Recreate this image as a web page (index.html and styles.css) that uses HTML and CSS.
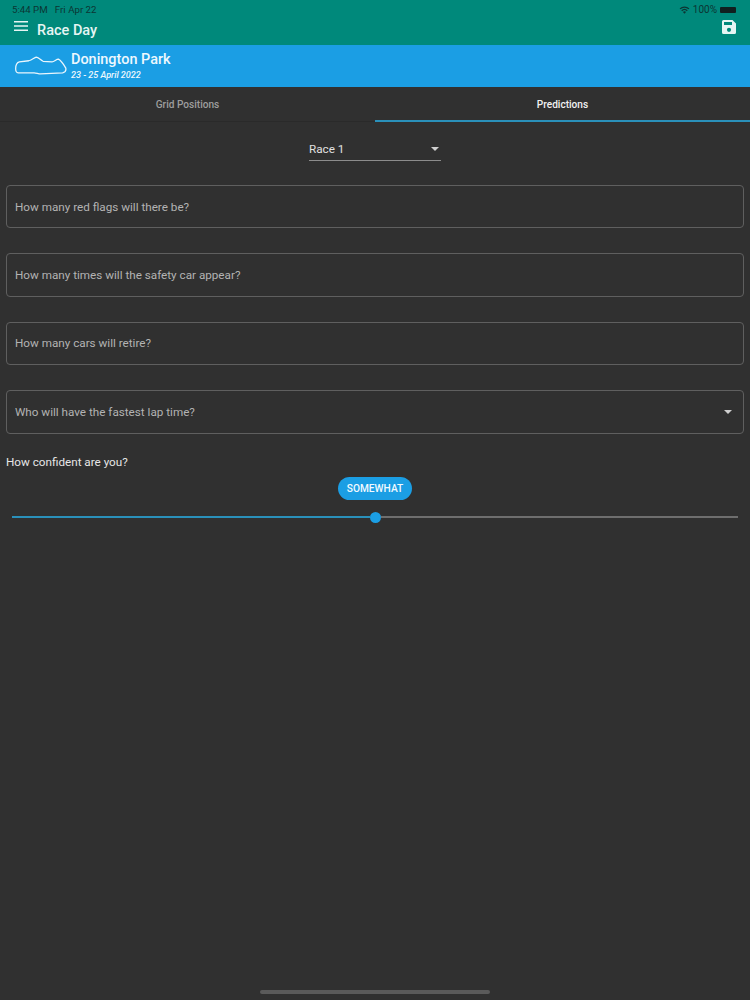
FILE: index.html
```html
<!DOCTYPE html>
<html lang="en">
<head>
    <meta charset="UTF-8">
    <meta name="viewport" content="width=device-width, initial-scale=1.0">
    <title>Race Day</title>
    <link rel="stylesheet" href="styles.css">
</head>
<body>
    <!-- Toolbar -->
    <header class="toolbar">
        <div class="status-bar">
            <span class="status-time">5:44 PM&nbsp;&nbsp;&nbsp;Fri Apr 22</span>
            <span class="status-right">
                <svg class="wifi-icon" viewBox="0 0 16 12"><path d="M8 11.500 5.700 9a3.300 3.300 0 0 1 4.600 0zM4.500 7.700 3.200 6.300a7 7 0 0 1 9.600 0l-1.300 1.400a5 5 0 0 0-7 0zM2 5 .6 3.600a10.700 10.700 0 0 1 14.800 0L14 5a8.700 8.700 0 0 0-12 0z"/></svg>
                <span>100%</span>
                <span class="battery"></span>
            </span>
        </div>
        <div class="title-row">
            <svg class="menu-icon" viewBox="0 0 14 10"><path d="M0 0h14v1.500H0zM0 4.200h14v1.500H0zM0 8.400h14v1.500H0z"/></svg>
            <h1 class="app-title">Race Day</h1>
            <svg class="save-icon" viewBox="0 0 14 14"><path fill-rule="evenodd" d="M1.500 0H10.500l3.500 3.500V12.500A1.500 1.500 0 0 1 12.500 14H1.500A1.500 1.500 0 0 1 0 12.500V1.500A1.500 1.500 0 0 1 1.500 0zM2 2v3h8V2zM7 7.700a2.100 2.100 0 1 0 0 4.200 2.100 2.100 0 0 0 0-4.200z"/></svg>
        </div>
    </header>

    <!-- Event -->
    <section class="event-banner">
        <svg class="track-map" viewBox="2 0 49 18"><path d="M2.500 12C2.500 8 4 6 6 5.500L15 4.500C18 4 20 1.500 22 1C24 1 26 4 28.500 5L37 5.500C39 5.500 41 3 43 3C45 4 48 8 50 11.500C50.500 14 49 15.500 47 16L26 17C24 17 22 16 20 16L5 16C3 16 2.500 14 2.500 12Z"/></svg>
        <div class="event-info">
            <h2 class="event-name">Donington Park</h2>
            <p class="event-dates">23 - 25 April 2022</p>
        </div>
    </section>

    <!-- Tabs -->
    <nav class="tabs">
        <div class="tab">Grid Positions</div>
        <div class="tab tab-active">Predictions</div>
    </nav>

    <!-- Form -->
    <main class="content">
        <div class="race-select-row">
            <div class="race-select">
                <span>Race 1</span>
                <span class="arrow"></span>
            </div>
        </div>

        <div class="field">How many red flags will there be?</div>
        <div class="field">How many times will the safety car appear?</div>
        <div class="field">How many cars will retire?</div>
        <div class="field field-select">
            <span>Who will have the fastest lap time?</span>
            <span class="arrow"></span>
        </div>

        <p class="slider-label">How confident are you?</p>
        <div class="pill-row"><span class="pill">SOMEWHAT</span></div>
        <div class="slider">
            <div class="slider-done"></div>
            <div class="slider-thumb"></div>
            <div class="slider-rest"></div>
        </div>
    </main>

    <div class="home-bar"></div>
</body>
</html>
```

FILE: styles.css
```css
/* Base */
* {
    margin: 0;
    padding: 0;
    box-sizing: border-box;
    font-family: 'Roboto', 'Liberation Sans', sans-serif;
}

body {
    background: #303030;
    color: #fff;
    width: 750px;
    height: 1000px;
    overflow: hidden;
    display: flex;
    flex-direction: column;
}

/* Toolbar */
.toolbar {
    height: 45px;
    background: #00897b;
    flex-shrink: 0;
}

.status-bar {
    height: 17px;
    padding: 2px 14px 0 12px;
    display: flex;
    justify-content: space-between;
    align-items: center;
    font-size: 9.700px;
    color: #0c3533;
}

.status-right {
    display: flex;
    align-items: center;
    gap: 3px;
    font-size: 10px;
}

.wifi-icon {
    width: 11px;
    height: 8px;
    fill: #0c3533;
}

.battery {
    width: 16px;
    height: 6px;
    background: #10201f;
    border-radius: 1px;
}

.title-row {
    display: flex;
    align-items: center;
    padding: 0 14px;
    height: 24px;
}

.menu-icon {
    width: 14px;
    height: 10px;
    fill: #e6f5f3;
    margin-bottom: 6px;
}

.app-title {
    font-size: 14.500px;
    font-weight: 500;
    line-height: 24px;
    padding-top: 3px;
    color: #e6f5f3;
    margin-left: 9px;
    flex: 1;
}

.save-icon {
    width: 14px;
    height: 14px;
    fill: #e6f5f3;
    margin-bottom: 4px;
}

/* Event */
.event-banner {
    height: 42px;
    background: #1b9ee4;
    display: flex;
    align-items: center;
    padding-left: 15px;
    flex-shrink: 0;
}

.track-map {
    width: 52px;
    height: 19px;
    fill: none;
    stroke: #eaf6fd;
    stroke-width: 1.200;
    margin-bottom: 1px;
}

.event-info {
    margin-left: 4px;
}

.event-name {
    font-size: 14.450px;
    font-weight: 500;
    line-height: 18px;
    color: #eef8fe;
}

.event-dates {
    font-size: 9px;
    font-style: italic;
    font-weight: 500;
    line-height: 13px;
    color: #eef8fe;
}

/* Tabs */
.tabs {
    display: flex;
    height: 35px;
    border-bottom: 1px solid #2a2a2a;
    flex-shrink: 0;
}

.tab {
    flex: 1;
    display: flex;
    align-items: center;
    justify-content: center;
    font-size: 10.100px;
    font-weight: 500;
    color: #9e9e9e;
}

.tab-active {
    color: #f2f2f2;
    border-bottom: 2px solid #2a90ba;
    margin-bottom: -1px;
    padding-top: 1px;
}

/* Form */
.content {
    padding: 18px 6px 0;
}

.race-select-row {
    display: flex;
    justify-content: center;
    margin-bottom: 24px;
}

.race-select {
    width: 132px;
    height: 21px;
    border-bottom: 1px solid #8c8c8c;
    display: flex;
    justify-content: space-between;
    align-items: center;
    padding-right: 1px;
    padding-bottom: 2px;
    font-size: 11.700px;
    color: #e0e0e0;
}

.arrow {
    width: 0;
    height: 0;
    border-left: 4.500px solid transparent;
    border-right: 4.500px solid transparent;
    border-top: 4.500px solid #cfcfcf;
    margin-right: 1px;
}

.field {
    height: 43.400px;
    border: 1px solid #5f5f5f;
    border-radius: 4px;
    display: flex;
    align-items: center;
    padding: 0 8px;
    margin-bottom: 25px;
    font-size: 11.700px;
    color: #b3b3b3;
}

.field-select {
    justify-content: space-between;
    margin-bottom: 0;
    padding-right: 10px;
}

.slider-label {
    margin-top: 21.400px;
    font-size: 11.700px;
    line-height: 14px;
    color: #e6e6e6;
}

.pill-row {
    display: flex;
    justify-content: center;
    margin-top: 8px;
}

.pill {
    width: 74px;
    height: 23px;
    border-radius: 12px;
    background: #1b9ee4;
    display: flex;
    align-items: center;
    justify-content: center;
    font-size: 10.200px;
    font-weight: 500;
    color: #f2faff;
}

.slider {
    display: flex;
    align-items: center;
    height: 11px;
    margin: 12px 6px 0;
}

.slider-done {
    flex: 1;
    height: 2px;
    background: #2a90ba;
}

.slider-rest {
    flex: 1;
    height: 2px;
    background: #6e6e6e;
}

.slider-thumb {
    width: 11px;
    height: 11px;
    border-radius: 50%;
    background: #1b9ee4;
    flex-shrink: 0;
}

/* Home indicator */
.home-bar {
    width: 230px;
    height: 4px;
    border-radius: 2px;
    background: #5a5a5a;
    margin: auto auto 6px;
}
```
